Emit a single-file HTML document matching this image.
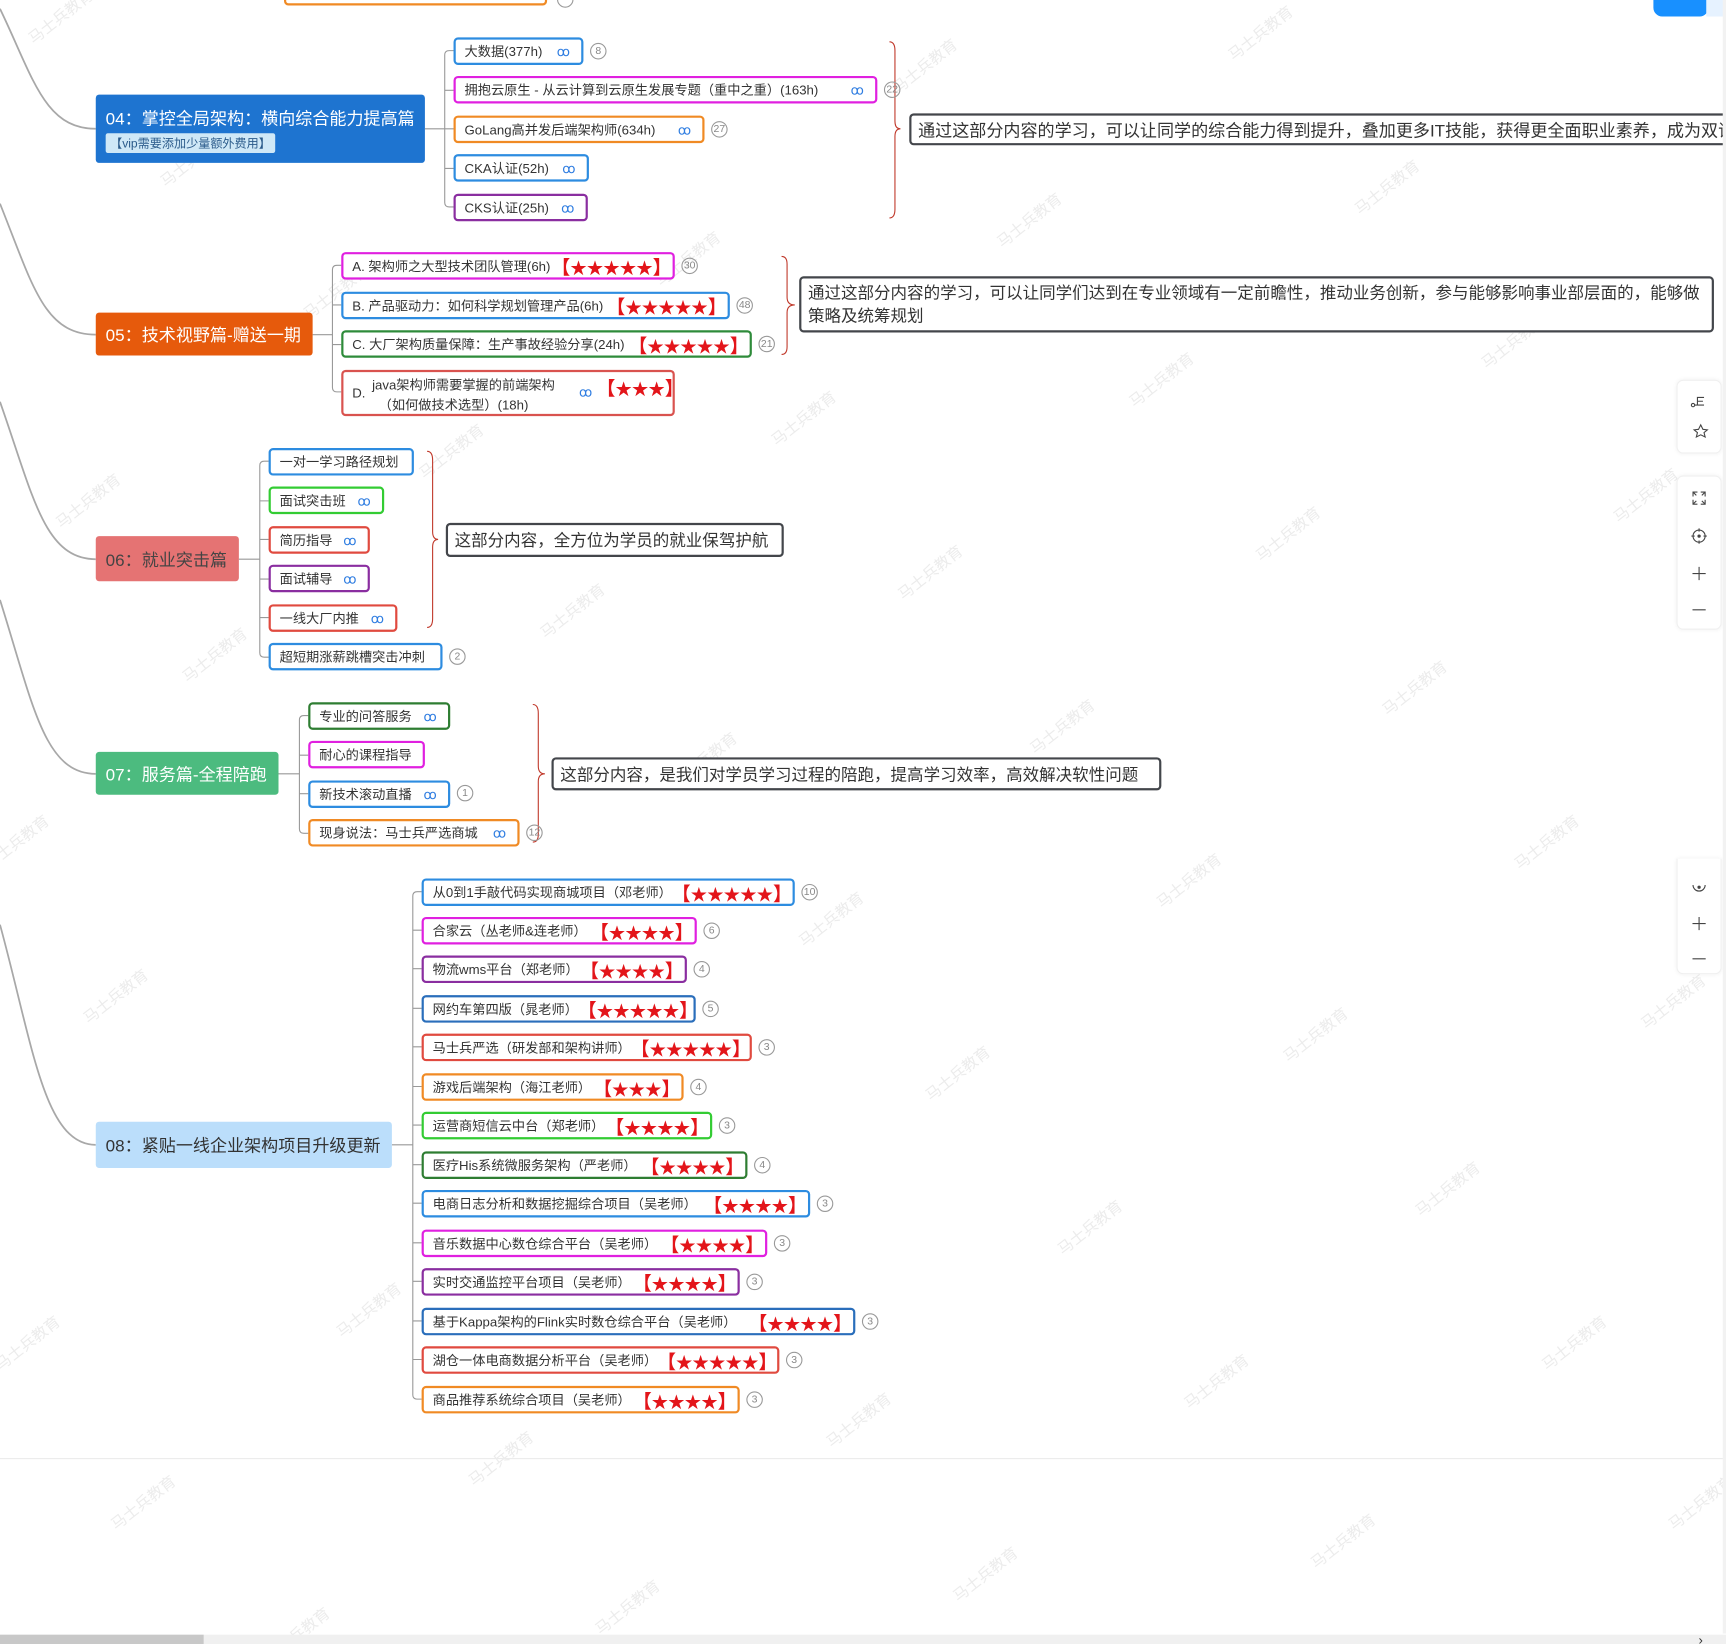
<!DOCTYPE html>
<html><head><meta charset="utf-8">
<style>
html,body{margin:0;padding:0;background:#fff;overflow:hidden;width:1726px;height:1644px}
.c{position:relative;width:1568px;height:1494px;transform:scale(1.1008);transform-origin:0 0;font-family:"Liberation Sans","Noto Sans CJK SC",sans-serif;color:#333}
.a{position:absolute}
.wm{position:absolute;color:#ececec;font-size:14px;transform:rotate(-38deg);white-space:nowrap;font-family:"Noto Sans CJK SC",sans-serif}
.n{position:absolute;border-radius:3px;display:flex;align-items:center;padding-left:9px;box-sizing:border-box;font-size:15.5px;white-space:nowrap}
.b{position:absolute;height:25px;box-sizing:border-box;border:2px solid;border-radius:4px;background:#fff;display:flex;align-items:center;justify-content:space-between;padding:0 0 0 8px;font-size:12px;white-space:nowrap;color:#333}
.lk{color:#2f7de1;font-size:12px;margin-left:6px;margin-right:10px}
.st{color:#e3151a;font-size:15px;letter-spacing:0px;margin-right:1px}
.st b{font-weight:900;font-size:17px}
.ci{position:absolute;width:13px;height:13px;border:1px solid #999;border-radius:50%;font-size:9.5px;color:#888;text-align:center;line-height:13px}
.sm{position:absolute;border:2px solid #43464b;border-radius:4px;box-sizing:border-box;background:#fff;font-size:15px;padding:4px 6px;color:#333;white-space:nowrap;overflow:hidden}
.tb{position:absolute;left:1523px;width:39px;background:#fff;border:1px solid #f0f0f0;border-radius:6px;box-shadow:0 0 4px rgba(0,0,0,.06);text-align:center;color:#444}
</style></head><body><div class="c">

<div class="wm" style="left:20px;top:5px">马士兵教育</div>
<div class="wm" style="left:1110px;top:20px">马士兵教育</div>
<div class="wm" style="left:805px;top:50px">马士兵教育</div>
<div class="wm" style="left:140px;top:135px">马士兵教育</div>
<div class="wm" style="left:1225px;top:160px">马士兵教育</div>
<div class="wm" style="left:900px;top:190px">马士兵教育</div>
<div class="wm" style="left:590px;top:225px">马士兵教育</div>
<div class="wm" style="left:270px;top:255px">马士兵教育</div>
<div class="wm" style="left:1340px;top:300px">马士兵教育</div>
<div class="wm" style="left:1020px;top:335px">马士兵教育</div>
<div class="wm" style="left:695px;top:370px">马士兵教育</div>
<div class="wm" style="left:375px;top:400px">马士兵教育</div>
<div class="wm" style="left:45px;top:445px">马士兵教育</div>
<div class="wm" style="left:1460px;top:440px">马士兵教育</div>
<div class="wm" style="left:1135px;top:475px">马士兵教育</div>
<div class="wm" style="left:810px;top:510px">马士兵教育</div>
<div class="wm" style="left:485px;top:545px">马士兵教育</div>
<div class="wm" style="left:160px;top:585px">马士兵教育</div>
<div class="wm" style="left:1250px;top:615px">马士兵教育</div>
<div class="wm" style="left:930px;top:650px">马士兵教育</div>
<div class="wm" style="left:605px;top:680px">马士兵教育</div>
<div class="wm" style="left:-20px;top:755px">马士兵教育</div>
<div class="wm" style="left:1370px;top:755px">马士兵教育</div>
<div class="wm" style="left:1045px;top:790px">马士兵教育</div>
<div class="wm" style="left:720px;top:825px">马士兵教育</div>
<div class="wm" style="left:70px;top:895px">马士兵教育</div>
<div class="wm" style="left:1485px;top:900px">马士兵教育</div>
<div class="wm" style="left:1160px;top:930px">马士兵教育</div>
<div class="wm" style="left:835px;top:965px">马士兵教育</div>
<div class="wm" style="left:1280px;top:1070px">马士兵教育</div>
<div class="wm" style="left:955px;top:1105px">马士兵教育</div>
<div class="wm" style="left:300px;top:1180px">马士兵教育</div>
<div class="wm" style="left:-10px;top:1210px">马士兵教育</div>
<div class="wm" style="left:1395px;top:1210px">马士兵教育</div>
<div class="wm" style="left:1070px;top:1245px">马士兵教育</div>
<div class="wm" style="left:745px;top:1280px">马士兵教育</div>
<div class="wm" style="left:420px;top:1315px">马士兵教育</div>
<div class="wm" style="left:95px;top:1355px">马士兵教育</div>
<div class="wm" style="left:1510px;top:1355px">马士兵教育</div>
<div class="wm" style="left:1185px;top:1390px">马士兵教育</div>
<div class="wm" style="left:860px;top:1420px">马士兵教育</div>
<div class="wm" style="left:535px;top:1450px">马士兵教育</div>
<div class="wm" style="left:235px;top:1475px">马士兵教育</div>

<svg class="a" style="left:0;top:0" width="1568" height="1494" fill="none">
<g stroke="#a8a8a8" stroke-width="1.6">
<path d="M0,8 C30,70 40,117 87,117"/>
<path d="M0,185 C30,260 40,304 87,304"/>
<path d="M0,365 C30,450 40,508 87,508"/>
<path d="M0,545 C30,640 40,703 87,703"/>
<path d="M0,840 C30,950 40,1040 87,1040"/>
</g>
<g stroke="#999" stroke-width="1">
<path d="M386,117H404M404,50V184M408,46H412M404,50Q404,46 408,46M404,82H412M404,117H412M404,153H412M408,188H412M404,184Q404,188 408,188"/>
<path d="M284,304H302M302,245V352M306,241H310M302,245Q302,241 306,241M302,277H310M302,313H310M306,356H310M302,352Q302,356 306,356"/>
<path d="M217,508H236M236,423V593M240,419H244M236,423Q236,419 240,419M236,455H244M236,490H244M236,526H244M236,561H244M240,597H244M236,593Q236,597 240,597"/>
<path d="M253,703H272M272,654V753M276,650H280M272,654Q272,650 276,650M272,686H280M272,721H280M276,757H280M272,753Q272,757 276,757"/>
<path d="M356,1040H375M375,814V1267M379,810H383M375,814Q375,810 379,810M375,845H383M375,880H383M375,916H383M375,951H383M375,987H383M375,1022H383M375,1058H383M375,1093H383M375,1129H383M375,1164H383M375,1200H383M375,1235H383M379,1271H383M375,1267Q375,1271 379,1271"/>
</g>
<g stroke="#c0392b" stroke-width="1">
<path d="M808,38Q813,38 813,46L813,110Q813,117 818,117Q813,117 813,124L813,190Q813,198 808,198"/>
<path d="M710,233Q715,233 715,240L715,270Q715,277 722,277Q715,277 715,284L715,315Q715,322 710,322"/>
<path d="M388,410Q393,410 393,418L393,483Q393,490 398,490Q393,490 393,497L393,562Q393,570 388,570"/>
<path d="M484,640Q489,640 489,648L489,696Q489,703 495,703Q489,703 489,710L489,758Q489,765 484,765"/>
</g>
<line x1="0" y1="1325" x2="1568" y2="1325" stroke="#ececec" stroke-width="1"/>
</svg>

<div class="a" style="left:258px;top:-20px;width:239px;height:25px;border:2px solid #f08a24;border-radius:4px;box-sizing:border-box"></div>
<div class="ci" style="left:506px;top:-8px"></div>
<div class="a" style="left:1502px;top:-10px;width:50px;height:25px;background:#1890ff;border-radius:8px"></div>
<div class="a" style="left:1550px;top:0;width:18px;height:15px;background:#e6f2ff"></div>

<div class="n" style="left:87px;top:86px;width:299px;height:62px;background:#1e74d0;color:#fff;align-items:flex-start;flex-direction:column;justify-content:center">
<div style="font-size:15.5px;margin-bottom:3px">04：掌控全局架构：横向综合能力提高篇</div>
<div style="font-size:11px;background:#cfe8f7;color:#2a5a8a;padding:1px 4px;border-radius:2px">【vip需要添加少量额外费用】</div>
</div>
<div class="b" style="left:412px;top:34px;width:118px;border-color:#2d8ce0">大数据(377h)<span class="lk">ꝏ</span></div><div class="ci" style="left:536px;top:39px">8</div>
<div class="b" style="left:412px;top:69px;width:385px;border-color:#e020e0">拥抱云原生 - 从云计算到云原生发展专题（重中之重）(163h)<span class="lk">ꝏ</span></div><div class="ci" style="left:803px;top:74px">22</div>
<div class="b" style="left:412px;top:105px;width:228px;border-color:#f08a24">GoLang高并发后端架构师(634h)<span class="lk">ꝏ</span></div><div class="ci" style="left:646px;top:110px">27</div>
<div class="b" style="left:412px;top:140px;width:123px;border-color:#2d8ce0">CKA认证(52h)<span class="lk">ꝏ</span></div>
<div class="b" style="left:412px;top:176px;width:122px;border-color:#8a2ea0">CKS认证(25h)<span class="lk">ꝏ</span></div>
<div class="sm" style="left:826px;top:103px;width:760px;height:29px;padding:2px 6px;font-size:15.5px">通过这部分内容的学习，可以让同学的综合能力得到提升，叠加更多IT技能，获得更全面职业素养，成为双语</div>

<div class="n" style="left:87px;top:284px;width:197px;height:39px;background:#e65a0c;color:#fff">05：技术视野篇-赠送一期</div>
<div class="b" style="left:310px;top:229px;width:303px;border-color:#e020e0">A. 架构师之大型技术团队管理(6h)<span class="st"><b>【</b>★★★★★<b>】</b></span></div><div class="ci" style="left:619px;top:234px">30</div>
<div class="b" style="left:310px;top:265px;width:353px;border-color:#2d8ce0">B. 产品驱动力：如何科学规划管理产品(6h)<span class="st"><b>【</b>★★★★★<b>】</b></span></div><div class="ci" style="left:669px;top:270px">48</div>
<div class="b" style="left:310px;top:300px;width:373px;border-color:#2e8b3a">C. 大厂架构质量保障：生产事故经验分享(24h)<span class="st"><b>【</b>★★★★★<b>】</b></span></div><div class="ci" style="left:689px;top:305px">21</div>
<div class="b" style="left:310px;top:336px;width:303px;height:42px;border-color:#d9534f;display:block;padding:0">
<span class="a" style="left:8px;top:12px">D.</span>
<span class="a" style="left:26px;top:3px">java架构师需要掌握的前端架构</span>
<span class="a" style="left:32px;top:21px">（如何做技术选型）(18h)</span>
<span class="a lk" style="left:208px;top:11px">ꝏ</span>
<span class="a st" style="left:230px;top:1px"><b>【</b>★★★<b>】</b></span>
</div>
<div class="sm" style="left:726px;top:251px;width:831px;height:51px;white-space:normal;line-height:21px;padding:3px 6px">通过这部分内容的学习，可以让同学们达到在专业领域有一定前瞻性，推动业务创新，参与能够影响事业部层面的，能够做策略及统筹规划</div>

<div class="n" style="left:87px;top:487px;width:130px;height:41px;background:#e57373;color:#444">06：就业突击篇</div>
<div class="b" style="left:244px;top:407px;width:132px;border-color:#2d8ce0">一对一学习路径规划<span></span></div>
<div class="b" style="left:244px;top:442px;width:105px;border-color:#33cc33">面试突击班<span class="lk">ꝏ</span></div>
<div class="b" style="left:244px;top:478px;width:92px;border-color:#e04a3f">简历指导<span class="lk">ꝏ</span></div>
<div class="b" style="left:244px;top:513px;width:92px;border-color:#8a2ea0">面试辅导<span class="lk">ꝏ</span></div>
<div class="b" style="left:244px;top:549px;width:117px;border-color:#e04a3f">一线大厂内推<span class="lk">ꝏ</span></div>
<div class="b" style="left:244px;top:584px;width:158px;border-color:#2d8ce0">超短期涨薪跳槽突击冲刺<span></span></div><div class="ci" style="left:408px;top:589px">2</div>
<div class="sm" style="left:405px;top:475px;width:307px;height:31px;padding:3px 6px">这部分内容，全方位为学员的就业保驾护航</div>

<div class="n" style="left:87px;top:683px;width:166px;height:39px;background:#4cbb7f;color:#fff">07：服务篇-全程陪跑</div>
<div class="b" style="left:280px;top:638px;width:129px;border-color:#2e7d32">专业的问答服务<span class="lk">ꝏ</span></div>
<div class="b" style="left:280px;top:673px;width:106px;border-color:#e020e0">耐心的课程指导<span></span></div>
<div class="b" style="left:280px;top:709px;width:129px;border-color:#2d8ce0">新技术滚动直播<span class="lk">ꝏ</span></div><div class="ci" style="left:415px;top:713px">1</div>
<div class="b" style="left:280px;top:744px;width:192px;border-color:#f08a24">现身说法：马士兵严选商城<span class="lk">ꝏ</span></div><div class="ci" style="left:478px;top:749px">12</div>
<div class="sm" style="left:501px;top:688px;width:554px;height:30px;padding:3px 6px">这部分内容，是我们对学员学习过程的陪跑，提高学习效率，高效解决软性问题</div>

<div class="n" style="left:87px;top:1019px;width:269px;height:42px;background:#bbdefb;color:#333">08：紧贴一线企业架构项目升级更新</div>
<div class="b" style="left:383px;top:798px;width:339px;border-color:#2d8ce0">从0到1手敲代码实现商城项目（邓老师）<span class="st"><b>【</b>★★★★★<b>】</b></span></div><div class="ci" style="left:728px;top:803px">10</div>
<div class="b" style="left:383px;top:833px;width:250px;border-color:#e020e0">合家云（丛老师&amp;连老师）<span class="st"><b>【</b>★★★★<b>】</b></span></div><div class="ci" style="left:639px;top:838px">6</div>
<div class="b" style="left:383px;top:868px;width:241px;border-color:#8a2ea0">物流wms平台（郑老师）<span class="st"><b>【</b>★★★★<b>】</b></span></div><div class="ci" style="left:630px;top:873px">4</div>
<div class="b" style="left:383px;top:904px;width:249px;border-color:#2a6ebb">网约车第四版（晁老师）<span class="st"><b>【</b>★★★★★<b>】</b></span></div><div class="ci" style="left:638px;top:909px">5</div>
<div class="b" style="left:383px;top:939px;width:300px;border-color:#e04a3f">马士兵严选（研发部和架构讲师）<span class="st"><b>【</b>★★★★★<b>】</b></span></div><div class="ci" style="left:689px;top:944px">3</div>
<div class="b" style="left:383px;top:975px;width:238px;border-color:#f08a24">游戏后端架构（海江老师）<span class="st"><b>【</b>★★★<b>】</b></span></div><div class="ci" style="left:627px;top:980px">4</div>
<div class="b" style="left:383px;top:1010px;width:264px;border-color:#33cc33">运营商短信云中台（郑老师）<span class="st"><b>【</b>★★★★<b>】</b></span></div><div class="ci" style="left:653px;top:1015px">3</div>
<div class="b" style="left:383px;top:1046px;width:296px;border-color:#2e7d32">医疗His系统微服务架构（严老师）<span class="st"><b>【</b>★★★★<b>】</b></span></div><div class="ci" style="left:685px;top:1051px">4</div>
<div class="b" style="left:383px;top:1081px;width:353px;border-color:#2d8ce0">电商日志分析和数据挖掘综合项目（吴老师）<span class="st"><b>【</b>★★★★<b>】</b></span></div><div class="ci" style="left:742px;top:1086px">3</div>
<div class="b" style="left:383px;top:1117px;width:314px;border-color:#e020e0">音乐数据中心数仓综合平台（吴老师）<span class="st"><b>【</b>★★★★<b>】</b></span></div><div class="ci" style="left:703px;top:1122px">3</div>
<div class="b" style="left:383px;top:1152px;width:289px;border-color:#8a2ea0">实时交通监控平台项目（吴老师）<span class="st"><b>【</b>★★★★<b>】</b></span></div><div class="ci" style="left:678px;top:1157px">3</div>
<div class="b" style="left:383px;top:1188px;width:394px;border-color:#2a6ebb">基于Kappa架构的Flink实时数仓综合平台（吴老师）<span class="st"><b>【</b>★★★★<b>】</b></span></div><div class="ci" style="left:783px;top:1193px">3</div>
<div class="b" style="left:383px;top:1223px;width:325px;border-color:#e04a3f">湖仓一体电商数据分析平台（吴老师）<span class="st"><b>【</b>★★★★★<b>】</b></span></div><div class="ci" style="left:714px;top:1228px">3</div>
<div class="b" style="left:383px;top:1259px;width:289px;border-color:#f08a24">商品推荐系统综合项目（吴老师）<span class="st"><b>【</b>★★★★<b>】</b></span></div><div class="ci" style="left:678px;top:1264px">3</div>

<div class="tb" style="top:345px;height:65px">
<svg width="39" height="65" fill="none" stroke="#444" stroke-width="1"><circle cx="14" cy="22" r="1.5"/><path d="M15.5,22H24M18,22V15H24M18,18.5H23"/><path d="M19,44L21,40L23,44L27,44.5L24,47L25,51L21,49L17,51L18,47L15,44.5Z"/></svg>
</div>
<div class="tb" style="top:432px;height:138px">
<svg width="39" height="138" fill="none" stroke="#444" stroke-width="1"><path d="M14,18V14H18M21,14H25V18M25,21V25H21M18,25H14V21M14,14L17,17M25,14L22,17M25,25L22,22M14,25L17,22"/><circle cx="19.5" cy="54" r="5.5"/><circle cx="19.5" cy="54" r="1" fill="#444"/><path d="M19.5,47V50M19.5,58V61M12.5,54H15.5M23.5,54H26.5"/><path d="M19.5,82V94M13.5,88H25.5M13.5,121H25.5"/></svg>
</div>
<div class="tb" style="top:780px;height:104px;border-top:none;border-radius:0 0 6px 6px">
<svg width="39" height="104" fill="none" stroke="#444" stroke-width="1"><path d="M14,24A5.5,5.5 0 0 0 25,24"/><circle cx="19.5" cy="26" r="1" fill="#444"/><path d="M19.5,53V65M13.5,59H25.5M13.5,91H25.5"/></svg>
</div>

<div class="a" style="left:1565px;top:0;width:3px;height:1484px;background:#f2f2f2"></div>
<div class="a" style="left:0;top:1485px;width:1568px;height:9px;background:#f0f0f0"></div>
<div class="a" style="left:0;top:1485px;width:185px;height:9px;background:#c8c8c8"></div>
<div class="a" style="left:1543px;top:1483px;font-size:12px;color:#333">›</div>
</div></body></html>
